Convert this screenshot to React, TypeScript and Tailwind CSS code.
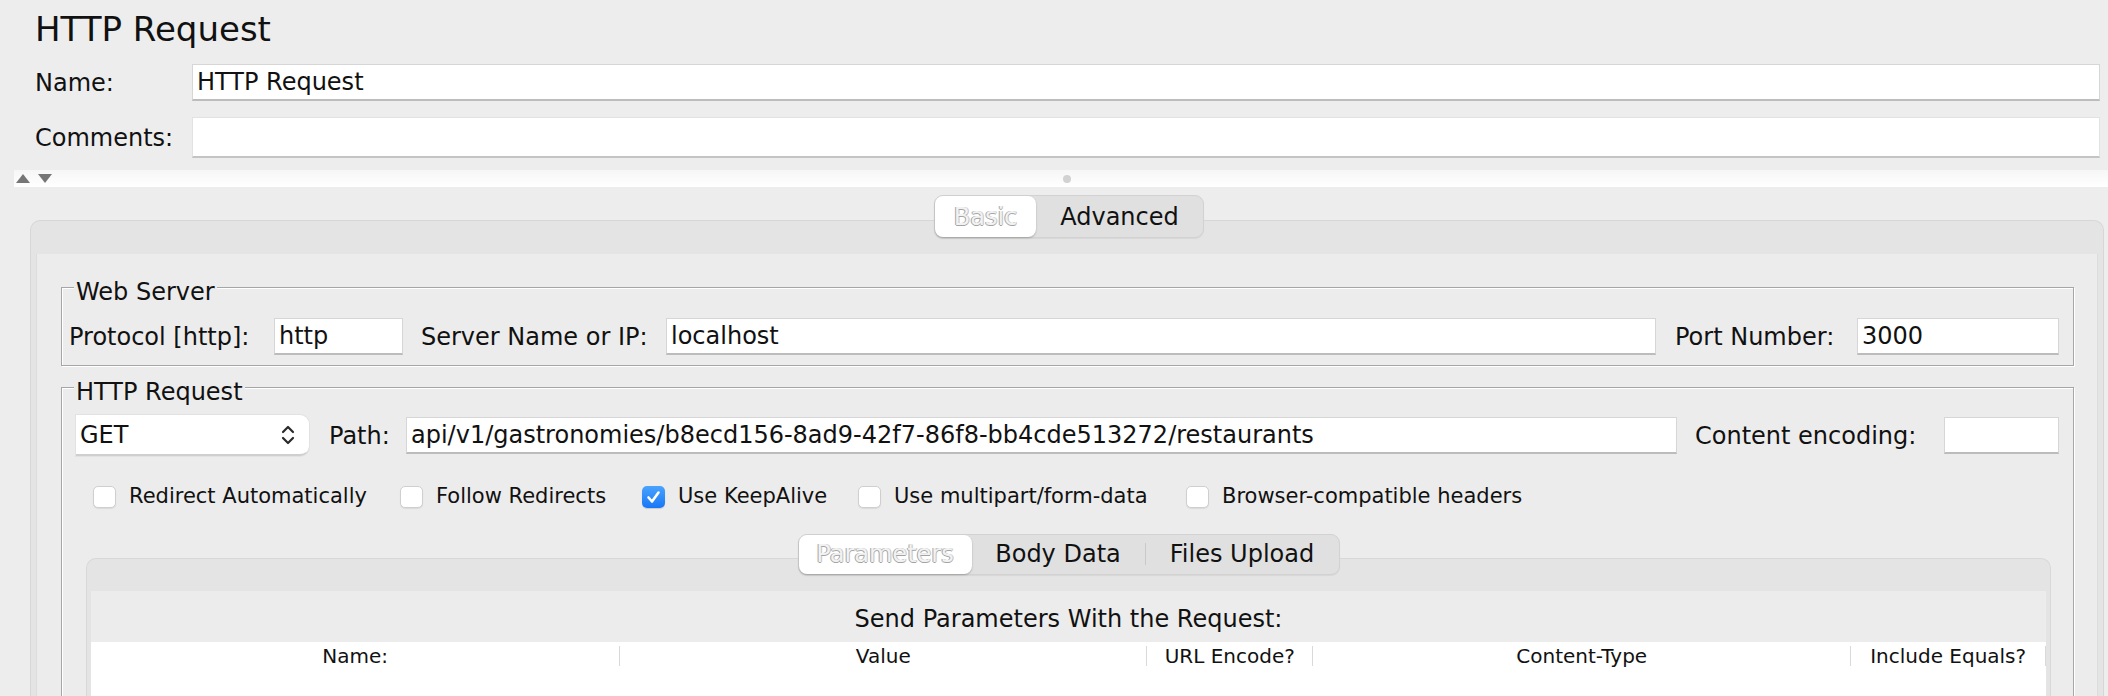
import React from 'react';

const field = 'bg-white border border-[#d6d6d6] border-b-2 border-b-[#bcbcbc] flex items-center pl-[4px] text-[24px] text-[#111] whitespace-nowrap overflow-hidden';

function Checkbox({ checked, label, className }: { checked?: boolean; label: string; className?: string }) {
  return (
    <div className={`flex items-center shrink-0 ${className ?? ''}`}>
      {checked ? (
        <div className="w-[23px] h-[22px] rounded-[5px] bg-gradient-to-b from-[#4aa3fd] to-[#1576f6] flex items-center justify-center shadow-[0_1px_1px_rgba(0,0,0,0.15)]">
          <svg width="15" height="14" viewBox="0 0 15 14">
            <path d="M2.5 7.5 L6 11.5 L12.5 2.5" fill="none" stroke="#fff" strokeWidth="2.6" strokeLinecap="round" strokeLinejoin="round" />
          </svg>
        </div>
      ) : (
        <div className="w-[23px] h-[22px] rounded-[5px] bg-white border border-[#cfcfcf] shadow-[0_1px_1px_rgba(0,0,0,0.08)]" />
      )}
      <span className="ml-[13px] text-[21px] text-[#111] whitespace-nowrap">{label}</span>
    </div>
  );
}

function Segmented({ items, widths, height }: { items: string[]; widths: number[]; height: string }) {
  return (
    <div className={`relative z-10 flex rounded-[9px] bg-[#e0e0e0] border border-[#d2d2d2] shadow-[0_1px_1px_rgba(0,0,0,0.06)] ${height}`}>
      {items.map((item, i) => (
        <div key={item} className="flex items-center" style={{ width: widths[i] }}>
          {i === 0 ? (
            <div className="w-full h-full rounded-[8px] bg-white shadow-[0_1px_2px_rgba(0,0,0,0.25)] flex items-center justify-center text-[24px] text-[#f2f2f2] [text-shadow:-1px_0_0_#a3a3a3,0_1px_0_#a3a3a3,1px_0_0_#c8c8c8]">
              {item}
            </div>
          ) : (
            <>
              {i > 1 && <div className="w-px h-[22px] bg-[#c9c9c9]" />}
              <div className="flex-1 text-center text-[24px] text-[#111]">{item}</div>
            </>
          )}
        </div>
      ))}
    </div>
  );
}

function Group({ title, children, className }: { title: string; children: React.ReactNode; className?: string }) {
  return (
    <div className={`border border-[#a6a6a6] shadow-[inset_1px_1px_0_#fff,1px_1px_0_#fff] ${className ?? ''}`}>
      <div className="-mt-[10px] ml-[12px] px-[2px] self-start inline-block bg-[#ececec] text-[24px] leading-[28px] text-[#111]">{title}</div>
      {children}
    </div>
  );
}

export default function App() {
  const cols = [
    { name: 'Name:', w: 'w-[530px]' },
    { name: 'Value', w: 'w-[528px]' },
    { name: 'URL Encode?', w: 'w-[166px]' },
    { name: 'Content-Type', w: 'w-[539px]' },
    { name: 'Include Equals?', w: 'w-[195px]' },
  ];

  return (
    <div className="w-[2108px] h-[696px] overflow-hidden bg-[#ededed] font-['DejaVu_Sans',sans-serif] text-[#111]">
      <div className="pt-[9px] pl-[35px] text-[34px] leading-[41px]">HTTP Request</div>

      <div className="mt-[14px] flex items-center pl-[35px] pr-[8px]">
        <div className="w-[157px] text-[24px]">Name:</div>
        <div className={`${field} flex-1 h-[37px]`}>HTTP Request</div>
      </div>
      <div className="mt-[16px] flex items-center pl-[35px] pr-[8px]">
        <div className="w-[157px] text-[24px]">Comments:</div>
        <div className="flex-1 h-[41px] bg-white border border-[#e2e2e2] border-b-2 border-b-[#c4c4c4]" />
      </div>

      {/* split pane divider */}
      <div className="mt-[12px] ml-[14px] h-[17px] flex items-center bg-gradient-to-b from-[#f6f6f6] to-white">
        <div className="flex items-center gap-[8px] pl-[2px] w-[60px]">
          <svg width="14" height="9" viewBox="0 0 14 9"><path d="M7 0 L14 9 L0 9 Z" fill="#767676" /></svg>
          <svg width="14" height="9" viewBox="0 0 14 9"><path d="M0 0 L14 0 L7 9 Z" fill="#767676" /></svg>
        </div>
        <div className="flex-1 flex justify-center">
          <div className="w-[8px] h-[8px] rounded-full bg-[#d2d2d2]" />
        </div>
        <div className="w-[48px]" />
      </div>

      {/* Basic / Advanced tabbed pane */}
      <div className="mt-[8px] ml-[30px] flex justify-center">
        <Segmented items={['Basic', 'Advanced']} widths={[101, 167]} height="h-[43px]" />
      </div>
      <div className="-mt-[18px] ml-[30px] mr-[4px] rounded-t-[10px] border border-b-0 border-[#d7d7d7] bg-[#e4e4e4]">
        <div className="h-[33px]" />
        <div className="mx-[5px] h-[500px] bg-[#ececec] border-x border-[#dcdcdc] flex flex-col pt-[33px]">
          <Group title="Web Server" className="ml-[24px] mr-[23px] flex flex-col pb-[10px]">
            <div className="mt-[12px] flex items-center pl-[7px] pr-[14px] text-[24px]">
              <div className="w-[205px] whitespace-nowrap">Protocol [http]:</div>
              <div className={`${field} w-[129px] h-[37px]`}>http</div>
              <div className="ml-[18px] w-[245px] whitespace-nowrap">Server Name or IP:</div>
              <div className={`${field} flex-1 h-[37px]`}>localhost</div>
              <div className="ml-[19px] w-[182px] whitespace-nowrap">Port Number:</div>
              <div className={`${field} w-[202px] h-[37px]`}>3000</div>
            </div>
          </Group>

          <Group title="HTTP Request" className="mt-[21px] ml-[24px] mr-[23px] flex flex-col h-[400px]">
            <div className="mt-[9px] flex items-center pl-[14px] pr-[14px] text-[24px]">
              <div className="w-[233px] h-[41px] bg-white rounded-r-[9px] border-b-2 border-[#cfcfcf] shadow-[0_0_0_1px_#e2e2e2] flex items-center">
                <span className="flex-1 pl-[4px]">GET</span>
                <svg width="14" height="22" viewBox="0 0 14 22" className="mr-[14px]">
                  <path d="M2 8 L7 3 L12 8 M2 14 L7 19 L12 14" fill="none" stroke="#2a2a2a" strokeWidth="2.2" strokeLinecap="round" strokeLinejoin="round" />
                </svg>
              </div>
              <div className="ml-[20px] w-[77px]">Path:</div>
              <div className={`${field} flex-1 h-[37px]`}>api/v1/gastronomies/b8ecd156-8ad9-42f7-86f8-bb4cde513272/restaurants</div>
              <div className="ml-[18px] w-[249px] whitespace-nowrap">Content encoding:</div>
              <div className={`${field} w-[115px] h-[37px]`} />
            </div>

            <div className="mt-[25px] flex items-center pl-[31px]">
              <Checkbox label="Redirect Automatically" className="w-[307px]" />
              <Checkbox label="Follow Redirects" className="w-[242px]" />
              <Checkbox checked label="Use KeepAlive" className="w-[216px]" />
              <Checkbox label="Use multipart/form-data" className="w-[328px]" />
              <Checkbox label="Browser-compatible headers" />
            </div>

            {/* Parameters / Body Data / Files Upload tabbed pane */}
            <div className="mt-[21px] ml-[24px] mr-[22px] flex justify-center">
              <Segmented items={['Parameters', 'Body Data', 'Files Upload']} widths={[173, 173, 194]} height="h-[41px]" />
            </div>
            <div className="-mt-[17px] ml-[24px] mr-[22px] flex-1 rounded-t-[10px] border border-b-0 border-[#d8d8d8] bg-[#e4e4e4] flex flex-col">
              <div className="h-[32px]" />
              <div className="mx-[4px] flex-1 bg-[#ececec] flex flex-col">
                <div className="pt-[14px] text-center text-[24px] leading-[28px]">Send Parameters With the Request:</div>
                <div className="mt-[9px] flex-1 bg-white">
                  <div className="pt-[2px] flex items-center h-[26px]">
                    {cols.map((c) => (
                      <div key={c.name} className={`${c.w} flex items-center`}>
                        <div className="flex-1 text-center text-[20px] leading-[24px] whitespace-nowrap">{c.name}</div>
                        <div className="w-px h-[20px] bg-[#d9d9d9]" />
                      </div>
                    ))}
                  </div>
                </div>
              </div>
            </div>
          </Group>
        </div>
      </div>
    </div>
  );
}
